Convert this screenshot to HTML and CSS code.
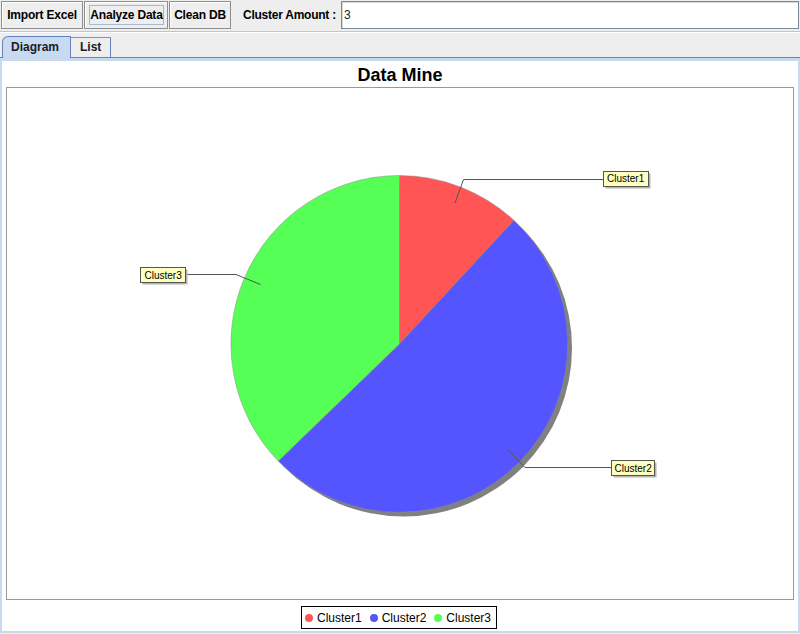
FILE: index.html
```html
<!DOCTYPE html>
<html>
<head>
<meta charset="utf-8">
<title>Data Mine</title>
<link rel="stylesheet" href="styles.css">
</head>
<body>
<div class="toolbar">
  <button class="btn btn-import">Import Excel</button>
  <button class="btn btn-analyze"><span class="focus">Analyze Data</span></button>
  <button class="btn btn-clean">Clean DB</button>
  <span class="field-label">Cluster Amount :</span>
  <div class="field">3</div>
</div>
<div class="tabs">
  <div class="tab tab-selected">Diagram</div>
  <div class="tab tab-plain">List</div>
</div>
<div class="panel">
  <div class="content">
    <div class="chart-title">Data Mine</div>
    <div class="plot">
      <svg class="pie" width="786" height="511" viewBox="7 89 786 511" xmlns="http://www.w3.org/2000/svg">
        <circle cx="403.5" cy="349" r="168.5" fill="#808080"/>
        <path d="M399.5,345 L399.5,176.5 A168.5,168.5 0 0 1 514,221.4 Z" fill="#ff5555" stroke="#8a8a8a" stroke-width="0.5"/>
        <path d="M399.5,345 L514,221.4 A168.5,168.5 0 1 1 278.3,462.1 Z" fill="#5555ff" stroke="#8a8a8a" stroke-width="0.5"/>
        <path d="M399.5,345 L278.3,462.1 A168.5,168.5 0 0 1 399.5,176.5 Z" fill="#55ff55" stroke="#8a8a8a" stroke-width="0.5"/>
        <g fill="none" stroke="#555" stroke-width="1">
          <polyline points="455,204 463.5,180.5 603,180.5"/>
          <polyline points="260.5,285.5 236,275.5 186,275.5"/>
          <polyline points="507.5,450 525,468.5 611,468.5"/>
        </g>
        <g class="labels">
          <rect x="605.5" y="174.5" width="45" height="15" fill="#b4b4b4"/>
          <rect x="603.5" y="172.5" width="45" height="15" fill="#ffffc0" stroke="#555"/>
          <text x="607" y="183">Cluster1</text>
          <rect x="142.5" y="270.5" width="45" height="15" fill="#b4b4b4"/>
          <rect x="140.5" y="268.5" width="45" height="15" fill="#ffffc0" stroke="#555"/>
          <text x="144.5" y="279.5">Cluster3</text>
          <rect x="613.5" y="463.5" width="43" height="15" fill="#b4b4b4"/>
          <rect x="611.5" y="461.5" width="43" height="15" fill="#ffffc0" stroke="#555"/>
          <text x="614.5" y="472.5">Cluster2</text>
        </g>
      </svg>
    </div>
    <div class="legend-row">
      <div class="legend">
        <span class="dot dot-red"></span><span class="legend-text">Cluster1</span>
        <span class="dot dot-blue"></span><span class="legend-text">Cluster2</span>
        <span class="dot dot-green"></span><span class="legend-text last">Cluster3</span>
      </div>
    </div>
  </div>
</div>
</body>
</html>
```

FILE: styles.css
```css
html, body {
  margin: 0;
  padding: 0;
}
body {
  width: 800px;
  height: 634px;
  overflow: hidden;
  background: #eeeeee;
  font-family: "Liberation Sans", Arial, sans-serif;
  font-size: 12px;
  color: #000;
}
.toolbar {
  display: flex;
  align-items: stretch;
  height: 28px;
  padding: 1px 1px 2px 1px;
  gap: 1px;
  border-bottom: 1px solid #c4c4c4;
  box-shadow: 0 1px 0 #ffffff;
}
.btn {
  font-family: "Liberation Sans", Arial, sans-serif;
  font-weight: bold;
  font-size: 12px;
  letter-spacing: -0.2px;
  color: #000;
  background: #eeeeee;
  border: 1px solid #8e8e8e;
  box-shadow: inset 1px 1px 0 #ffffff;
  margin: 0;
  padding: 0;
  height: 28px;
  display: flex;
  align-items: center;
  justify-content: center;
  white-space: nowrap;
}
.btn-import { width: 82px; }
.btn-analyze { width: 84px; }
.btn-clean { width: 62px; }
.focus {
  display: flex;
  align-items: center;
  justify-content: center;
  width: 73px;
  height: 18px;
  border: 1px solid #a3b9d3;
  margin-left: 1px;
}
.field-label {
  font-weight: bold;
  letter-spacing: -0.25px;
  margin-left: 11px;
  width: 97px;
  display: flex;
  align-items: center;
  white-space: nowrap;
}
.field {
  flex: 1;
  background: #ffffff;
  border: 1px solid #7a8a99;
  box-shadow: inset 1px 1px 0 #d8d8d8;
  display: flex;
  align-items: center;
  padding-left: 2px;
  color: #222;
}
.tabs {
  display: flex;
  align-items: flex-end;
  height: 21px;
  margin-top: 4px;
  padding-left: 2px;
  border-bottom: 1px solid #6382bf;
}
.tab {
  font-weight: bold;
  color: #1a1a2a;
  display: flex;
  align-items: center;
  box-sizing: border-box;
}
.tab-selected {
  width: 69px;
  height: 22px;
  margin-bottom: -1px;
  padding-left: 8px;
  padding-bottom: 2px;
  background: #c8daf0;
  border: 1px solid #6382bf;
  border-bottom: none;
  border-top-left-radius: 6px 6px;
}
.tab-plain {
  width: 40px;
  height: 20px;
  padding-left: 9px;
  padding-bottom: 1px;
  background: #eeeeee;
  border-top: 1px solid #8a93a8;
  border-right: 1px solid #6382bf;
}
.panel {
  background: #c8daf0;
  padding: 3px 2px 2px 2px;
  height: 570px;
}
.content {
  background: #ffffff;
  height: 570px;
  padding: 4px 4px 0 4px;
  box-sizing: border-box;
  display: flex;
  flex-direction: column;
}
.chart-title {
  font-weight: bold;
  font-size: 18px;
  line-height: 20px;
  height: 20px;
  text-align: center;
  margin-bottom: 2px;
}
.plot {
  border: 1px solid #999999;
  height: 511px;
}
.pie {
  display: block;
}
.labels text {
  font-family: "Liberation Sans", Arial, sans-serif;
  font-size: 10px;
  fill: #000;
}
.legend-row {
  display: flex;
  justify-content: center;
  margin-top: 6px;
  padding-right: 2px;
}
.legend {
  display: flex;
  align-items: center;
  height: 21px;
  border: 1px solid #000;
  padding: 0 5px 0 3px;
  font-size: 12px;
}
.dot {
  width: 8px;
  height: 8px;
  border-radius: 50%;
  margin-right: 4px;
}
.dot-red { background: #ff5555; }
.dot-blue { background: #5555ff; }
.dot-green { background: #55ff55; }
.legend-text {
  margin-right: 8px;
}
.legend-text.last {
  margin-right: 0;
}
```
